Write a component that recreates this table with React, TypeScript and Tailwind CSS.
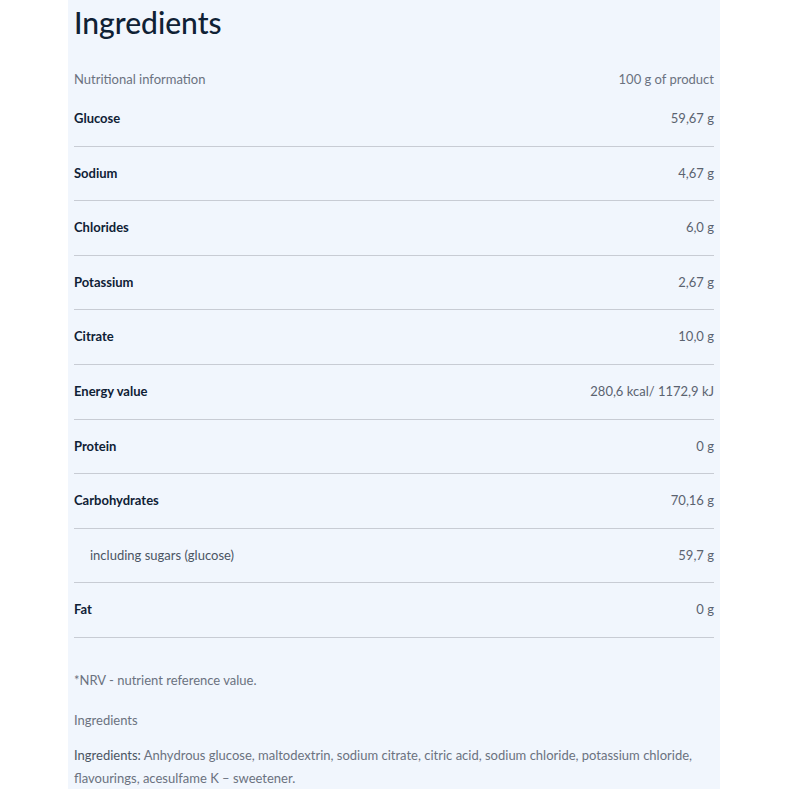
const ROWS = [
  { name: "Glucose", value: "59,67 g" },
  { name: "Sodium", value: "4,67 g" },
  { name: "Chlorides", value: "6,0 g" },
  { name: "Potassium", value: "2,67 g" },
  { name: "Citrate", value: "10,0 g" },
  { name: "Energy value", value: "280,6 kcal/ 1172,9 kJ" },
  { name: "Protein", value: "0 g" },
  { name: "Carbohydrates", value: "70,16 g" },
  { name: "including sugars (glucose)", value: "59,7 g", sub: true },
  { name: "Fat", value: "0 g" },
];

export default function App() {
  return (
    <div className="min-h-screen bg-white font-['Lato',sans-serif]">
      <div className="ml-[68px] w-[652px] bg-[#f1f6fd] px-[6px] pb-[10px]">
        <h2 className="pt-[2px] text-[30px] leading-[40px] font-medium text-[#0f2135]">Ingredients</h2>

        <div className="mt-[24px] flex items-center justify-between text-[13px] leading-[26px] text-[#6b7280]">
          <span>Nutritional information</span>
          <span>100 g of product</span>
        </div>

        {ROWS.map((row) => (
          <div
            key={row.name}
            className="flex h-[54.6px] items-center justify-between border-b border-[#c8ccd4] text-[13px]"
          >
            {row.sub ? (
              <span className="pl-[16px] text-[#4b5563]">{row.name}</span>
            ) : (
              <span className="font-bold text-[#0f2135]">{row.name}</span>
            )}
            <span className="text-[#5b6370]">{row.value}</span>
          </div>
        ))}

        <p className="mt-[31px] text-[13px] leading-[23px] text-[#6b7280]">*NRV - nutrient reference value.</p>
        <p className="mt-[17px] text-[13px] leading-[23px] text-[#6b7280]">Ingredients</p>
        <p className="mt-[12px] text-[13px] leading-[23px] text-[#6b7280]">
          <span className="text-[#4b5563]">Ingredients:</span> Anhydrous glucose, maltodextrin, sodium citrate, citric
          acid, sodium chloride, potassium chloride, flavourings, acesulfame K – sweetener.
        </p>
      </div>
    </div>
  );
}
